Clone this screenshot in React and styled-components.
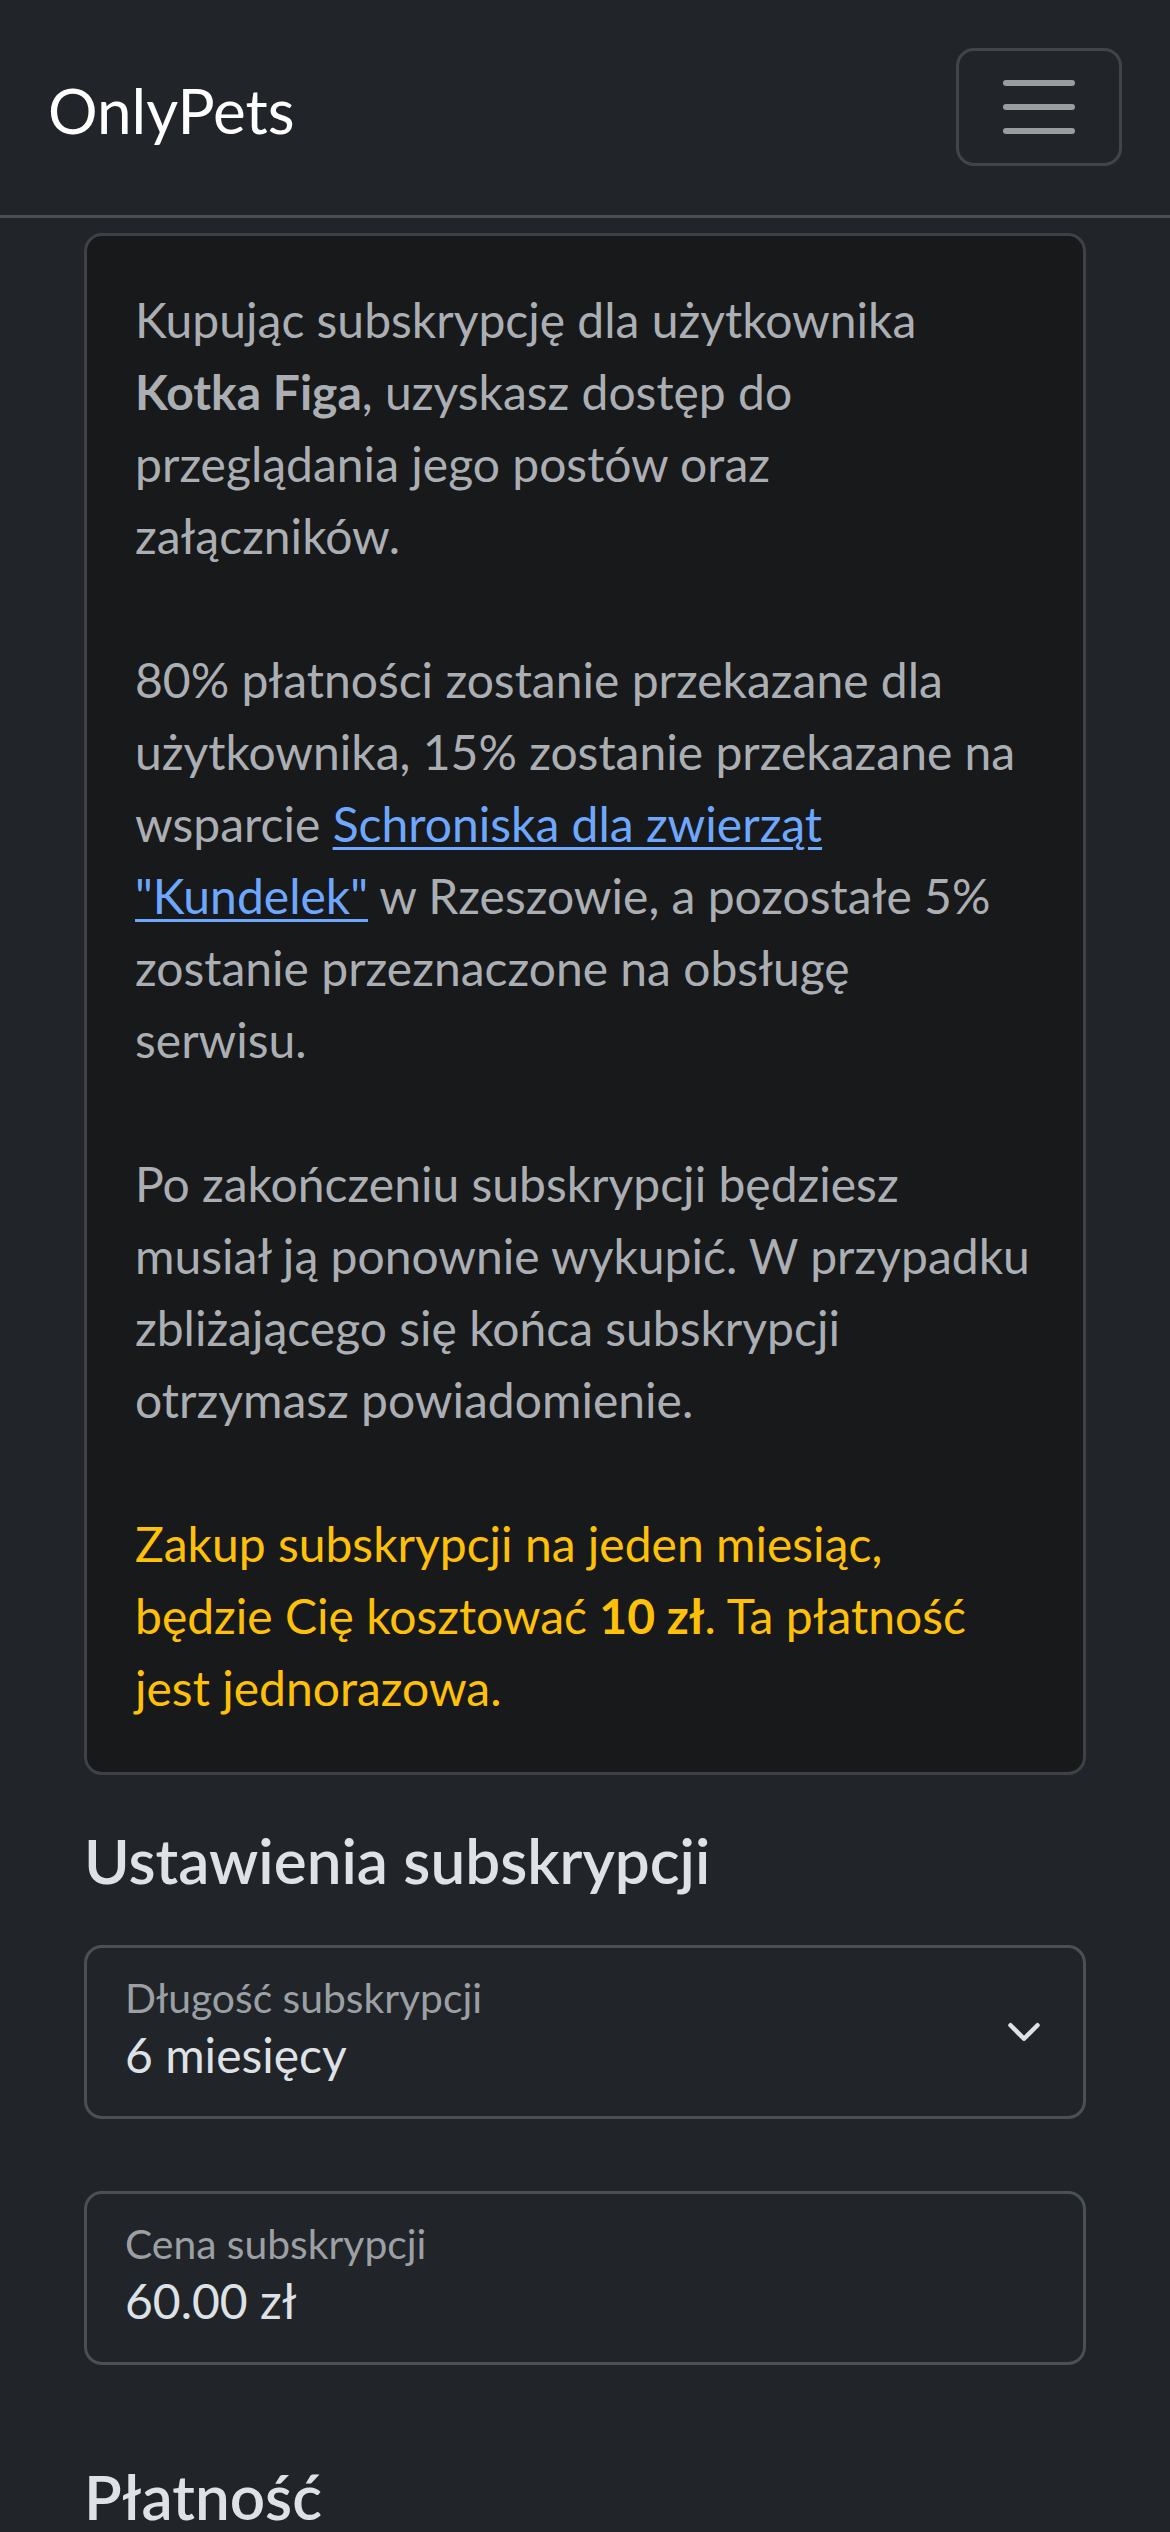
import React from 'react';
import styled, { createGlobalStyle } from 'styled-components';

const GlobalStyle = createGlobalStyle`
  body {
    margin: 0;
    background: #212529;
    color: #dee2e6;
    font-family: Lato, "Liberation Sans", sans-serif;
  }
`;

const Navbar = styled.header`
  display: flex;
  align-items: center;
  justify-content: space-between;
  padding: 48px 48px 49px 48px;
  border-bottom: 3px solid #495057;
`;

const Brand = styled.a`
  padding-top: 5px;
  font-size: 62px;
  color: #fff;
  text-decoration: none;
`;

const Toggler = styled.button`
  width: 166px;
  height: 118px;
  display: flex;
  align-items: center;
  justify-content: center;
  padding: 0;
  background: transparent;
  border: 3px solid rgba(255, 255, 255, 0.15);
  border-radius: 18px;
`;

const Main = styled.main`
  padding: 15px 84px 0;
`;

const Card = styled.div`
  background: #18191b;
  border: 3px solid #3e4145;
  border-radius: 18px;
  padding: 48px;
`;

const Para = styled.p`
  margin: 0 0 72px;
  font-size: 48px;
  line-height: 72px;
  color: ${p => (p.$warning ? '#ffc107' : '#abafb4')};
  white-space: nowrap;

  &:last-child {
    margin-bottom: 0;
  }

  strong {
    font-weight: 700;
  }
`;

const Link = styled.a`
  color: #6ea8fe;
  text-decoration: underline;
  text-underline-offset: 5px;
  text-decoration-thickness: 3px;
`;

const SectionTitle = styled.h2`
  margin: ${p => (p.$first ? '48px 0 48px' : '94px 0 0')};
  font-size: 62px;
  line-height: 1.2;
  font-weight: 600;
  color: #dee2e6;
`;

const Fields = styled.div`
  display: flex;
  flex-direction: column;
  gap: 72px;
`;

const Field = styled.div`
  display: flex;
  align-items: center;
  height: 174px;
  box-sizing: border-box;
  padding: 0 41px 0 38px;
  border: 3px solid #495057;
  border-radius: 18px;
  background: #212529;
`;

const FieldBody = styled.div`
  flex: 1;
  align-self: stretch;
  display: flex;
  flex-direction: column;
  padding-top: 26px;
`;

const FieldLabel = styled.span`
  font-size: 40.8px;
  line-height: 48px;
  color: #9ca0a4;
`;

const FieldValue = styled.span`
  margin-top: 3px;
  font-size: 48px;
  line-height: 60px;
  color: #dee2e6;
`;

const TogglerIcon = () => (
  <svg width="90" height="90" viewBox="0 0 30 30">
    <path
      d="M4 7h22M4 15h22M4 23h22"
      stroke="rgba(255,255,255,0.55)"
      strokeWidth="2"
      strokeLinecap="round"
      fill="none"
    />
  </svg>
);

const Chevron = () => (
  <svg width="36" height="36" viewBox="0 0 16 16">
    <path
      d="m2 5 6 6 6-6"
      stroke="#dee2e6"
      strokeWidth="2"
      strokeLinecap="round"
      strokeLinejoin="round"
      fill="none"
    />
  </svg>
);

export default function App() {
  return (
    <>
      <GlobalStyle />
      <Navbar>
        <Brand href="#">OnlyPets</Brand>
        <Toggler aria-label="Menu">
          <TogglerIcon />
        </Toggler>
      </Navbar>
      <Main>
        <Card>
          <Para>
            Kupując subskrypcję dla użytkownika<br />
            <strong>Kotka Figa</strong>, uzyskasz dostęp do<br />
            przeglądania jego postów oraz<br />
            załączników.
          </Para>
          <Para>
            80% płatności zostanie przekazane dla<br />
            użytkownika, 15% zostanie przekazane na<br />
            wsparcie <Link href="#">Schroniska dla zwierząt<br />"Kundelek"</Link> w Rzeszowie, a pozostałe 5%<br />
            zostanie przeznaczone na obsługę<br />
            serwisu.
          </Para>
          <Para>
            Po zakończeniu subskrypcji będziesz<br />
            musiał ją ponownie wykupić. W przypadku<br />
            zbliżającego się końca subskrypcji<br />
            otrzymasz powiadomienie.
          </Para>
          <Para $warning>
            Zakup subskrypcji na jeden miesiąc,<br />
            będzie Cię kosztować <strong>10 zł</strong>. Ta płatność<br />
            jest jednorazowa.
          </Para>
        </Card>

        <SectionTitle $first>Ustawienia subskrypcji</SectionTitle>
        <Fields>
          <Field>
            <FieldBody>
              <FieldLabel>Długość subskrypcji</FieldLabel>
              <FieldValue>6 miesięcy</FieldValue>
            </FieldBody>
            <Chevron />
          </Field>
          <Field>
            <FieldBody>
              <FieldLabel>Cena subskrypcji</FieldLabel>
              <FieldValue>60.00 zł</FieldValue>
            </FieldBody>
          </Field>
        </Fields>

        <SectionTitle>Płatność</SectionTitle>
      </Main>
    </>
  );
}
